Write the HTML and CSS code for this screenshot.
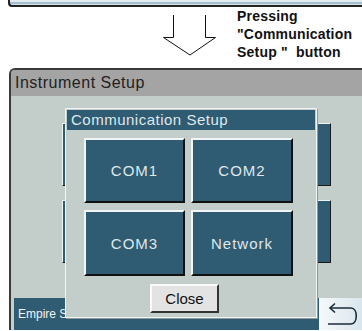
FILE: index.html
```html
<!DOCTYPE html>
<html lang="en">
<head>
  <meta charset="UTF-8" />
  <meta name="viewport" content="width=device-width, initial-scale=1.0"/>
  <title>Communication Setup</title>
  <link rel="stylesheet" href="styles.css">
</head>
<body>
  <div class="prev"></div>

  <div class="caption">
    <svg class="down-arrow" width="54" height="42" viewBox="0 0 54 42">
      <path d="M10.5 0 V22.5 H0.5 L27 40 L52.5 22.5 H42.5 V0" fill="none" stroke="#111" stroke-width="1"/>
    </svg>
    <div class="caption-text">
      Pressing<br>
      "Communication<br>
      Setup&nbsp;"&nbsp; button
    </div>
  </div>

  <div class="window">
    <div class="title">Instrument Setup</div>
    <div class="content">
      <div class="bg-grid">
        <div class="bg-btn"></div>
        <div class="bg-btn"></div>
        <div class="bg-btn"></div>
        <div class="bg-btn"></div>
      </div>
    </div>
    <div class="status">
      <span class="status-text">Empire State Bank Plaza</span>
      <div class="back">
        <svg width="40" height="32" viewBox="0 0 40 32">
          <path d="M11 10 H32 C39 10 39 26 32 26 H9" fill="none" stroke="#1d2b3a" stroke-width="1.6"/>
          <path d="M16 5.5 L11 10 L16 14.5" fill="none" stroke="#1d2b3a" stroke-width="1.6"/>
        </svg>
      </div>
    </div>

    <div class="dialog">
      <div class="dialog-title">Communication Setup</div>
      <div class="dialog-grid">
        <button class="com-btn">COM1</button>
        <button class="com-btn">COM2</button>
        <button class="com-btn">COM3</button>
        <button class="com-btn">Network</button>
      </div>
      <button class="close-btn">Close</button>
    </div>
  </div>
</body>
</html>
```

FILE: styles.css
```css
:root {
  --panel: #c3ceca;
  --blue: #2f5b73;
  --light-text: #dfe8ea;
}

body {
  margin: 0;
  background: #ffffff;
  font-family: "Liberation Sans", Arial, sans-serif;
  overflow: hidden;
}

.prev {
  margin-left: 8px;
  height: 5px;
  border-left: 2px solid #222;
  border-bottom: 2px solid #222;
  border-bottom-left-radius: 4px;
  background: linear-gradient(to bottom, #e3ecf0 0, #e3ecf0 2px, #a6bfcc 2px, #a6bfcc 4px, #d6e2e8 4px);
}

.caption {
  height: 61px;
  display: flex;
  align-items: flex-start;
  margin-left: 163px;
}

.down-arrow {
  margin-top: 8px;
}

.caption-text {
  margin-left: 20px;
  font-size: 14px;
  font-weight: bold;
  line-height: 18px;
  letter-spacing: 0.2px;
  color: #111;
}

.window {
  position: relative;
  margin-left: 9px;
  width: 360px;
  border-top: 2px solid #3a3a3a;
  border-left: 2px solid #3a3a3a;
  border-top-left-radius: 6px;
  background: var(--panel);
}

.title {
  height: 26px;
  line-height: 26px;
  padding-left: 4px;
  background: #a4a4a4;
  color: #222;
  font-size: 16px;
  letter-spacing: 0.5px;
  border-top-left-radius: 4px;
}

.content {
  padding: 27px 0 35px 51px;
}

.bg-grid {
  display: grid;
  grid-template-columns: 130px 130px;
  grid-template-rows: 63px 63px;
  column-gap: 9px;
  row-gap: 14px;
}

.bg-btn {
  background: var(--blue);
  border-top: 1px solid #eef3f3;
  border-left: 1px solid #eef3f3;
  border-right: 1px solid #1a1a1a;
  border-bottom: 1px solid #1a1a1a;
}

.status {
  display: flex;
  justify-content: space-between;
  height: 32px;
  margin-left: 3px;
  background: var(--blue);
}

.status-text {
  padding: 9px 0 0 4px;
  font-size: 12px;
  line-height: 14px;
  color: #f2f5f6;
}

.back {
  width: 52px;
  height: 32px;
  background: linear-gradient(to right, #f6f9fb, #d3e1ea);
}

.dialog {
  position: absolute;
  left: 54px;
  top: 38px;
  width: 252px;
  height: 210px;
  box-sizing: border-box;
  padding: 1px;
  border: 1px solid #f1f5f5;
  background: var(--panel);
  box-shadow: 1px 1px 0 #8d9a97;
}

.dialog-title {
  height: 20px;
  line-height: 20px;
  padding-left: 4px;
  background: var(--blue);
  color: var(--light-text);
  font-size: 15px;
  letter-spacing: 0.5px;
}

.dialog-grid {
  display: grid;
  grid-template-columns: 101px 102px;
  grid-template-rows: 65px 66px;
  column-gap: 6px;
  row-gap: 7px;
  margin: 8px 0 0 17px;
}

.com-btn {
  box-sizing: border-box;
  background: var(--blue);
  color: var(--light-text);
  font-family: inherit;
  font-size: 15px;
  letter-spacing: 1px;
  border-top: 2px solid #f1f5f5;
  border-left: 2px solid #f1f5f5;
  border-right: 2px solid #111;
  border-bottom: 2px solid #111;
  padding: 0;
}

.close-btn {
  display: block;
  box-sizing: border-box;
  width: 69px;
  height: 29px;
  margin: 8px 0 0 83px;
  padding: 0;
  background: #e3e3e3;
  color: #111;
  font-family: inherit;
  font-size: 15px;
  border-top: 2px solid #fafafa;
  border-left: 2px solid #fafafa;
  border-right: 2px solid #333;
  border-bottom: 2px solid #333;
}
```
